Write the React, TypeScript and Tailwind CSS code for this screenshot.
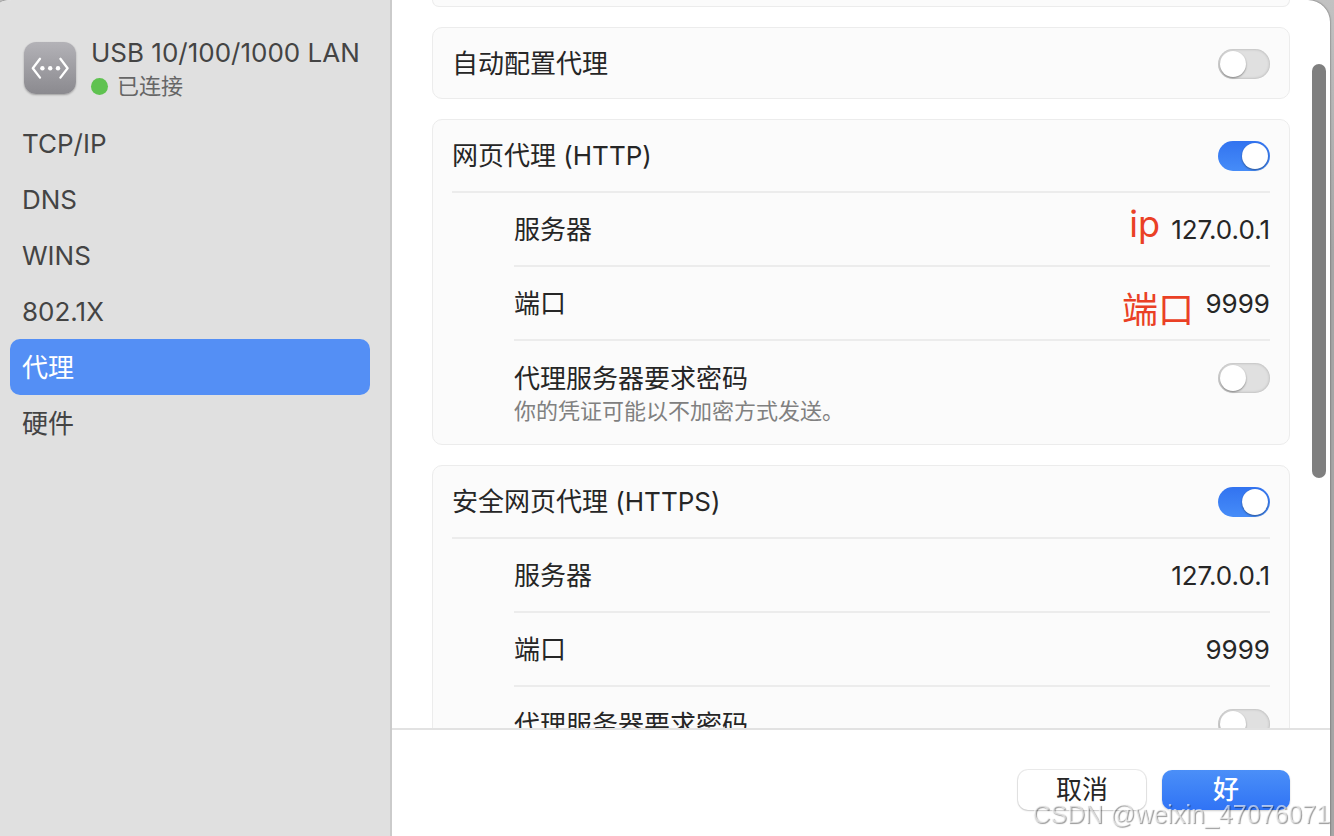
import { useId, useState } from "react";

const tabs = ["TCP/IP", "DNS", "WINS", "802.1X", "代理", "硬件"];

function NetworkIcon() {
  return (
    <svg
      viewBox="0 0 52 52"
      className="size-[52px] shrink-0 rounded-xl bg-linear-to-b from-[#b3b2b7] to-[#8b8a8f] shadow-[0_1px_2px_rgba(0,0,0,0.3)]"
      fill="none"
      aria-hidden="true"
    >
      <g stroke="#fff" strokeWidth="2.3" strokeLinecap="round" strokeLinejoin="round">
        <path d="M16 16.8 8.8 26.2 16 35.6" />
        <path d="M36.4 16.8 43.6 26.2 36.4 35.6" />
      </g>
      <g fill="#fff">
        <circle cx="18.4" cy="26.2" r="2.2" />
        <circle cx="26.2" cy="26.2" r="2.2" />
        <circle cx="34" cy="26.2" r="2.2" />
      </g>
    </svg>
  );
}

function Switch({ id, defaultChecked = false }: { id: string; defaultChecked?: boolean }) {
  return (
    <input
      id={id}
      type="checkbox"
      role="switch"
      defaultChecked={defaultChecked}
      className="relative h-[30px] w-[52px] shrink-0 appearance-none rounded-full bg-[#e0e0e0] shadow-[inset_0_0_3px_rgba(0,0,0,0.25)] before:absolute before:top-[2px] before:left-[2px] before:size-[26px] before:rounded-full before:bg-white before:shadow-[0_1px_2px_rgba(0,0,0,0.4)] checked:bg-linear-to-b checked:from-[#3273f0] checked:to-[#468cf8] checked:shadow-none checked:before:left-[24px]"
    />
  );
}

function Card({ children }: { children: React.ReactNode }) {
  return (
    <section className="rounded-[10px] border border-[#ececec] bg-[#fbfbfb] px-[19px]">{children}</section>
  );
}

function SwitchRow({ label, defaultChecked }: { label: string; defaultChecked?: boolean }) {
  const id = useId();
  return (
    <div className="flex h-[70px] items-center justify-between pt-[2px]">
      <label htmlFor={id}>{label}</label>
      <Switch id={id} defaultChecked={defaultChecked} />
    </div>
  );
}

function ValueRow({ label, value, children }: { label: string; value: string; children?: React.ReactNode }) {
  const id = useId();
  return (
    <div className="relative flex h-[74px] items-center justify-between border-b-2 border-[#ececec] pt-[2px]">
      <label htmlFor={id}>{label}</label>
      {children}
      <input id={id} type="text" defaultValue={value} className="field-sizing-content bg-transparent text-right outline-none" />
    </div>
  );
}

function ProxyCard({ title, annotated = false }: { title: string; annotated?: boolean }) {
  const id = useId();
  return (
    <Card>
      <SwitchRow label={title} defaultChecked />
      <div className="mt-px border-t-2 border-[#ececec] pl-[62px]">
        <ValueRow label="服务器" value="127.0.0.1">
          {annotated && (
            <span className="absolute top-2 right-[110px] text-[36px] leading-[46px] text-[#ea4025]">ip</span>
          )}
        </ValueRow>
        <ValueRow label="端口" value="9999">
          {annotated && (
            <span className="absolute top-5 right-[76px] text-[36px] leading-[46px] text-[#ea4025]">端口</span>
          )}
        </ValueRow>
        <div className="flex items-start justify-between pt-[22px] pb-4">
          <div>
            <label htmlFor={id} className="block leading-8">
              代理服务器要求密码
            </label>
            <p className="text-[22px] leading-[33px] text-[#808080]">你的凭证可能以不加密方式发送。</p>
          </div>
          <Switch id={id} />
        </div>
      </div>
    </Card>
  );
}

export default function App() {
  const [active, setActive] = useState("代理");
  return (
    <div className="h-screen overflow-hidden bg-[#a9a9a9] bg-linear-to-b from-[#c2c2c2] to-[#a6a6a6] to-30% pr-1 font-['Inter','Noto_Sans_CJK_SC',sans-serif] text-[26px] leading-8 text-[#262626]">
      <div className="relative flex h-full overflow-hidden rounded-tl-[12px_3px] rounded-tr-[22px] bg-white shadow-[0_0_2px_rgba(0,0,0,0.6)]">
        <aside className="w-[392px] shrink-0 border-r-2 border-[#cbcbcb] bg-[#e0e0e0] pr-5 pl-[10px] text-[#444444]">
          <header className="flex items-center gap-[15px] pt-[35px] pl-[14px]">
            <NetworkIcon />
            <div>
              <h1 className="leading-9 whitespace-nowrap">USB 10/100/1000 LAN</h1>
              <p className="flex items-center gap-[9px] text-[22px] leading-[30px] text-[#666666]">
                <span className="size-[17px] rounded-full bg-[#5fc250]" />
                已连接
              </p>
            </div>
          </header>
          <nav className="flex flex-col pt-[14px]">
            {tabs.map((tab) => (
              <button
                key={tab}
                type="button"
                onClick={() => setActive(tab)}
                className={
                  tab === active
                    ? "h-14 rounded-[10px] bg-[#548ff5] px-3 pt-[2px] text-left text-white"
                    : "h-14 rounded-[10px] px-3 pt-[2px] text-left"
                }
              >
                {tab}
              </button>
            ))}
          </nav>
        </aside>

        <div className="flex min-w-0 flex-1 flex-col">
          <main className="flex min-h-0 flex-1 flex-col gap-5 overflow-hidden pr-10 pl-10 *:shrink-0">
            <div className="h-[7px] rounded-b-[10px] border border-t-0 border-[#ececec] bg-[#fbfbfb]" />
            <Card>
              <SwitchRow label="自动配置代理" />
            </Card>
            <ProxyCard title="网页代理 (HTTP)" annotated />
            <ProxyCard title="安全网页代理 (HTTPS)" />
          </main>
          <footer className="flex h-[108px] shrink-0 items-start justify-end gap-4 border-t-2 border-[#e2e2e2] pt-10 pr-10">
            <button
              type="button"
              className="h-10 w-32 rounded-[10px] bg-white shadow-[0_0_0_1px_rgba(0,0,0,0.08),0_1px_2px_rgba(0,0,0,0.15)]"
            >
              取消
            </button>
            <button
              type="button"
              className="h-10 w-32 rounded-[10px] bg-linear-to-b from-[#4b8ff8] to-[#3073f5] font-medium text-white shadow-[0_1px_2px_rgba(0,0,0,0.2)]"
            >
              好
            </button>
          </footer>
        </div>

        <div className="absolute top-16 right-1 h-[414px] w-[14px] rounded-full bg-[#7f7f7f]" />
      </div>
      <p className="pointer-events-none fixed right-1 bottom-[6px] font-['Liberation_Sans',sans-serif] text-[25px] leading-8 text-white/60 [text-shadow:1px_1px_1px_rgba(0,0,0,0.4)]">
        CSDN @weixin_47076071
      </p>
    </div>
  );
}
